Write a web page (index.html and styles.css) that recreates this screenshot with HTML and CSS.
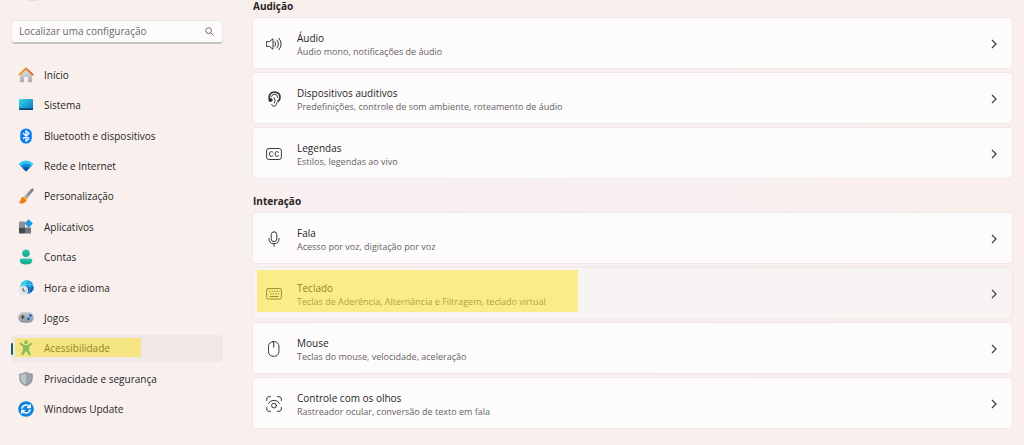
FILE: index.html
```
<!DOCTYPE html>
<html lang="pt-BR">
<head>
    <meta charset="utf-8">
    <title>Acessibilidade</title>
    <link rel="stylesheet" href="styles.css">
</head>
<body>
    <div class="window">
        <aside class="sidebar">
            <div class="avatar"></div>
            <form class="search">
                <input type="text" placeholder="Localizar uma configuração" aria-label="Localizar uma configuração">
                <button type="button" aria-label="Pesquisar">
                    <svg viewBox="0 0 10 10"><circle cx="4" cy="4" r="3.2"/><path d="M6.4 6.4 9.4 9.4"/></svg>
                </button>
            </form>
            <nav class="menu">
                <a href="#">
                    <svg viewBox="0 0 16 16">
                        <defs>
                            <linearGradient id="wall" x2="0" y2="1"><stop stop-color="#e2e2e2"/><stop offset="1" stop-color="#a9a9ab"/></linearGradient>
                            <linearGradient id="roof"><stop stop-color="#f3a02c"/><stop offset="1" stop-color="#dc5a18"/></linearGradient>
                        </defs>
                        <path fill="url(#wall)" d="M2 7 8 2l6 5v7.500q0 .8-.8.8H10V10.500q0-.7-.7-.7H6.700q-.7 0-.7.7v4.800H2.800q-.8 0-.8-.8z"/>
                        <path fill="none" stroke="url(#roof)" stroke-width="1.800" stroke-linecap="round" stroke-linejoin="round" d="M1.300 7.700 8 1.300l6.700 6.400"/>
                    </svg>
                    <span>Início</span>
                </a>
                <a href="#">
                    <svg viewBox="0 0 16 16">
                        <defs><linearGradient id="screen" x2="1" y2="1"><stop stop-color="#38dbe8"/><stop offset="1" stop-color="#0873c4"/></linearGradient></defs>
                        <rect x="1" y="2" width="14" height="11" rx="1" fill="url(#screen)"/>
                        <path fill="#074a80" d="M1 11.200h14v.8q0 1-1 1H2q-1 0-1-1z"/>
                    </svg>
                    <span>Sistema</span>
                </a>
                <a href="#">
                    <svg viewBox="0 0 16 16">
                        <rect x="2.200" y=".4" width="11.600" height="15.200" rx="5.600" fill="#0a7cf2"/>
                        <path fill="none" stroke="#fff" stroke-width="1.200" stroke-linejoin="round" d="m5 5.200 6 5.300-3 2.700V2.800l3 2.700L5 10.800"/>
                    </svg>
                    <span>Bluetooth e dispositivos</span>
                </a>
                <a href="#">
                    <svg viewBox="0 0 16 16">
                        <path fill="#34c8ee" d="M.5 6Q8-.8 15.500 6L8 13.500z"/>
                        <path fill="#168dd8" d="M2.500 8Q8 3.200 13.500 8L8 13.500z"/>
                        <path fill="#0b57a6" d="M4.500 10Q8 7 11.500 10L8 13.500z"/>
                    </svg>
                    <span>Rede e Internet</span>
                </a>
                <a href="#">
                    <svg viewBox="0 0 16 16">
                        <defs><linearGradient id="handle" x1="1" x2="0" y2="1"><stop stop-color="#686d75"/><stop offset="1" stop-color="#b7bcc2"/></linearGradient></defs>
                        <path fill="url(#handle)" d="M15.300.7q.8.7 0 2L9 11 6 8.500 13.300 1q1.200-1 2-.3z"/>
                        <path fill="#ef7d1d" d="M5.700 8.800q2.500.3 3 2.500-.2 3.900-4.500 4.200Q2 15.600.6 14.600q1.700-.6 2-2.600.5-3 3.100-3.200z"/>
                        <path fill="#fbb13c" d="M5.700 8.800q2.500.3 3 2.500l-1 1q-1.500-2.500-3-3z"/>
                    </svg>
                    <span>Personalização</span>
                </a>
                <a href="#">
                    <svg viewBox="0 0 16 16">
                        <path fill="#8b9098" d="M1 2.500h6v6H1z"/>
                        <path fill="#44484f" d="M1 8.500h6v6H1z"/>
                        <path fill="#72777f" d="M7 8.500h6v6H7z"/>
                        <rect x="7.700" y="1.500" width="6" height="6" rx=".8" transform="rotate(45 10.700 4.500)" fill="#1b9de6"/>
                    </svg>
                    <span>Aplicativos</span>
                </a>
                <a href="#">
                    <svg viewBox="0 0 16 16">
                        <defs><linearGradient id="person" x2="0" y2="1"><stop stop-color="#25cbb0"/><stop offset="1" stop-color="#14a188"/></linearGradient></defs>
                        <circle cx="8" cy="4.200" r="3.700" fill="url(#person)"/>
                        <path fill="url(#person)" d="M3.500 9.500h9q1.800 0 1.800 1.700 0 4.300-6.300 4.300t-6.300-4.300q0-1.700 1.800-1.700z"/>
                    </svg>
                    <span>Contas</span>
                </a>
                <a href="#">
                    <svg viewBox="0 0 16 16">
                        <circle cx="9" cy="7" r="6.700" fill="#1a9ddd"/>
                        <path fill="#39cde8" d="M9 .3A6.700 6.700 0 0 0 2.300 7H8z"/>
                        <path fill="#0b64b8" d="M15.700 7A6.700 6.700 0 0 1 9 13.700L10 7z"/>
                        <path fill="none" stroke="#69cff0" stroke-width=".6" d="M3 4.500h12M9 .5q6 6.500 1 13"/>
                        <circle cx="5.200" cy="10.700" r="4.900" fill="#e4e6e9"/>
                        <path fill="none" stroke="#50545a" stroke-width="1" d="M5 7.700V11h2.500"/>
                    </svg>
                    <span>Hora e idioma</span>
                </a>
                <a href="#">
                    <svg viewBox="0 0 16 16">
                        <defs><linearGradient id="pad" x2="0" y2="1"><stop stop-color="#c2c7cd"/><stop offset="1" stop-color="#8e949c"/></linearGradient></defs>
                        <rect x=".3" y="2.300" width="15.400" height="10.400" rx="5" fill="url(#pad)"/>
                        <path stroke="#34383d" stroke-width="1.200" d="M2.700 7h4M4.700 5v4"/>
                        <circle cx="12.500" cy="5.500" r="1.300" fill="#0a65c2"/>
                        <circle cx="10.500" cy="8.800" r="1.300" fill="#0a65c2"/>
                    </svg>
                    <span>Jogos</span>
                </a>
                <a href="#" class="active" aria-current="page">
                    <svg viewBox="0 0 16 16">
                        <circle cx="8" cy="2.200" r="1.900" fill="#1c9698"/>
                        <path fill="#1c9698" d="M2.700 2.700 6.500 5h3l3.800-2.300q1.400-.2 1.200 1.300L11 6.700v3l1.700 4.700q-.5 1.400-1.900.6L8 10.800 5.200 15q-1.400.8-1.900-.6L5 9.700v-3L1.500 4q-.2-1.500 1.200-1.300z"/>
                    </svg>
                    <span>Acessibilidade</span>
                </a>
                <a href="#">
                    <svg viewBox="0 0 16 16">
                        <path fill="#8c939b" d="M8 .8q3 2 6.800 2v4.500q0 5.500-6.800 8-6.800-2.500-6.800-8V2.800q3.800 0 6.800-2z"/>
                        <path fill="#bdc2c8" d="M8 2.100v11.800q-5.600-2.300-5.600-6.800V3.800q3.200-.1 5.600-1.700z"/>
                        <path fill="#9da4ac" d="M8 2.100v11.800q5.600-2.300 5.600-6.800V3.800Q10.400 3.700 8 2.100z"/>
                    </svg>
                    <span>Privacidade e segurança</span>
                </a>
                <a href="#">
                    <svg viewBox="0 0 16 16">
                        <circle cx="8" cy="8" r="7.800" fill="#0f83dc"/>
                        <path fill="none" stroke="#fff" stroke-width="1.400" stroke-linecap="round" stroke-linejoin="round" d="M3.800 7.200Q5 4 8.200 4q2.300 0 3.700 2.300M12.200 3.800v2.700H9.500M12.200 8.800Q11 12 7.800 12q-2.300 0-3.700-2.300M3.800 12.200V9.500h2.700"/>
                    </svg>
                    <span>Windows Update</span>
                </a>
            </nav>
        </aside>

        <main class="content">
            <section>
                <h2>Audição</h2>
                <a href="#" class="card">
                    <svg class="icon" viewBox="0 0 16 16"><path d="M.7 5.700h2.600L7 2.700v10.600l-3.700-3H.7zM9 5.700q1.500 2.300 0 4.600M11 4q3 4 0 8M13 2.300q4.400 5.700 0 11.400"/></svg>
                    <div class="label"><h3>Áudio</h3><p>Áudio mono, notificações de áudio</p></div>
                    <svg class="chevron" viewBox="0 0 6 10"><path d="m1 1 4 4-4 4"/></svg>
                </a>
                <a href="#" class="card">
                    <svg class="icon" viewBox="0 0 16 16">
                        <path stroke-width="1.800" d="M3.300 7.500Q2.800 1.200 8.500 1.200T14 6.500q0 2-1.700 3.500"/>
                        <path d="M12.300 10q-1.700 1.600-2 3.300-.6 2.200-2.600 2-1.700-.2-2-1.800M5.500 5.500q.5-2.300 3-2.300 3.200 0 3.200 3.200M8 6.500q2.500 2.800.3 5.500"/>
                        <circle cx="4.500" cy="9" r="1.600" fill="#242424"/>
                    </svg>
                    <div class="label"><h3>Dispositivos auditivos</h3><p>Predefinições, controle de som ambiente, roteamento de áudio</p></div>
                    <svg class="chevron" viewBox="0 0 6 10"><path d="m1 1 4 4-4 4"/></svg>
                </a>
                <a href="#" class="card">
                    <svg class="icon" viewBox="0 0 16 16"><rect x=".6" y="2.500" width="14.800" height="11" rx="2.200"/><path d="M7 6.300q-.6-.7-1.600-.7-1.900 0-1.900 2.400t1.900 2.400q1 0 1.600-.7M12.500 6.300q-.6-.7-1.600-.7Q9 5.600 9 8t1.900 2.400q1 0 1.600-.7"/></svg>
                    <div class="label"><h3>Legendas</h3><p>Estilos, legendas ao vivo</p></div>
                    <svg class="chevron" viewBox="0 0 6 10"><path d="m1 1 4 4-4 4"/></svg>
                </a>
            </section>

            <section>
                <h2>Interação</h2>
                <a href="#" class="card">
                    <svg class="icon" viewBox="0 0 16 16"><rect x="5.200" y=".8" width="5.600" height="9.800" rx="2.800"/><path d="M2.900 7.500q0 5.200 5.100 5.200t5.100-5.200M8 12.700v2.700"/></svg>
                    <div class="label"><h3>Fala</h3><p>Acesso por voz, digitação por voz</p></div>
                    <svg class="chevron" viewBox="0 0 6 10"><path d="m1 1 4 4-4 4"/></svg>
                </a>
                <a href="#" class="card hover">
                    <svg class="icon" viewBox="0 0 16 16"><rect x=".6" y="2.600" width="14.800" height="10.400" rx="1.600"/><path stroke-width="1.400" stroke-dasharray="1.300 1.400" stroke-linecap="butt" d="M3 5.400h11M4.200 7.900h9"/><path d="M4 10.500h8"/></svg>
                    <div class="label"><h3>Teclado</h3><p>Teclas de Aderência, Alternância e Filtragem, teclado virtual</p></div>
                    <svg class="chevron" viewBox="0 0 6 10"><path d="m1 1 4 4-4 4"/></svg>
                </a>
                <a href="#" class="card">
                    <svg class="icon" viewBox="0 0 16 16"><rect x="2.500" y=".7" width="10.400" height="14.600" rx="4.500"/><path d="M7.700.7v5.600"/></svg>
                    <div class="label"><h3>Mouse</h3><p>Teclas do mouse, velocidade, aceleração</p></div>
                    <svg class="chevron" viewBox="0 0 6 10"><path d="m1 1 4 4-4 4"/></svg>
                </a>
                <a href="#" class="card">
                    <svg class="icon" viewBox="0 0 16 16"><path d="M.7 4.500V3Q.7.700 3 .7h1.500M11.500.7H13q2.300 0 2.300 2.300v1.500M15.300 11.500V13q0 2.300-2.300 2.300h-1.500M4.500 15.300H3Q.7 15.300.7 13v-1.500M2.500 7.500Q4 4.300 8 4.300t5.500 3.200"/><circle cx="8" cy="9.600" r="2.400"/></svg>
                    <div class="label"><h3>Controle com os olhos</h3><p>Rastreador ocular, conversão de texto em fala</p></div>
                    <svg class="chevron" viewBox="0 0 6 10"><path d="m1 1 4 4-4 4"/></svg>
                </a>
            </section>
        </main>
    </div>
</body>
</html>
```
FILE: styles.css
```
* {
    box-sizing: border-box;
}

body {
    margin: 0;
    min-height: 100vh;
    background: radial-gradient(ellipse at 50% 50%, #f8eef2 0%, #f9f0ee 60%);
    font-family: 'Open Sans', 'Noto Sans', sans-serif;
    font-size: 10px;
    color: #262626;
}

a {
    color: inherit;
    text-decoration: none;
}

.window {
    display: flex;
    gap: 29px;
    padding: 0 11px;
}

/* Sidebar */
.sidebar {
    width: 212px;
    flex-shrink: 0;
}

.avatar {
    width: 10px;
    height: 1px;
    margin: 0 0 19px 17px;
    background-color: #e4dfe2;
    border-radius: 0 0 5px 5px;
}

.search {
    display: flex;
    align-items: center;
    height: 24px;
    padding: 0 8px 1px 7px;
    background-color: #fdfcfb;
    border: 1px solid #ece5e3;
    border-bottom: 2px solid #c9c4c2;
    border-radius: 4px;
}

.search input {
    flex: 1;
    min-width: 0;
    padding: 0;
    border: none;
    outline: none;
    background: none;
    font: inherit;
}

.search input::placeholder {
    color: #6c6969;
}

.search button {
    display: flex;
    padding: 0;
    border: none;
    background: none;
}

.search svg {
    width: 9px;
    height: 9px;
    fill: none;
    stroke: #5c5a5a;
}

.menu {
    display: grid;
    grid-auto-rows: 1fr;
    gap: 3px;
    min-height: 362px;
    margin-top: 17px;
}

.menu a {
    position: relative;
    display: flex;
    align-items: center;
    gap: 10px;
    padding-left: 7px;
    border-radius: 4px;
}

.menu svg {
    width: 16px;
    height: 16px;
}

.menu .active {
    background-color: #f0e7e7;
}

.menu .active::before {
    content: '';
    position: absolute;
    left: 0;
    top: 8px;
    width: 2px;
    height: 12px;
    background-color: #13656f;
    border-radius: 1px;
}

/* Marker strokes */
.menu .active::after,
.card.hover::after {
    content: '';
    position: absolute;
    background-color: rgba(250, 228, 30, 0.5);
}

.menu .active::after {
    left: 4px;
    top: 3px;
    width: 126px;
    height: 19px;
}

.card.hover::after {
    left: 4px;
    top: 2px;
    width: 321px;
    height: 42px;
}

/* Content */
.content {
    flex: 1;
    min-width: 0;
}

section {
    display: flex;
    flex-direction: column;
    gap: 3px;
    margin-bottom: 16px;
}

h2 {
    margin: 0 0 2px 1px;
    font-size: 10px;
    line-height: 12px;
    font-weight: 700;
}

.card {
    position: relative;
    display: flex;
    align-items: center;
    gap: 15px;
    height: 52px;
    padding: 2px 15px 0 13px;
    background-color: #fdfbfb;
    border: 1px solid #f0e8e8;
    border-radius: 4px;
}

.card.hover {
    background-color: #f8f4f4;
}

.icon {
    width: 16px;
    height: 16px;
    fill: none;
    stroke: #3a3a3a;
    stroke-linecap: round;
    stroke-linejoin: round;
}

.label {
    flex: 1;
}

.label h3 {
    margin: 0;
    font-size: 10px;
    line-height: 14px;
    font-weight: 400;
}

.label p {
    margin: 0;
    font-size: 9px;
    line-height: 13px;
    color: #666464;
}

.chevron {
    width: 6px;
    height: 10px;
    fill: none;
    stroke: #444;
    stroke-width: 1.3;
}
```
